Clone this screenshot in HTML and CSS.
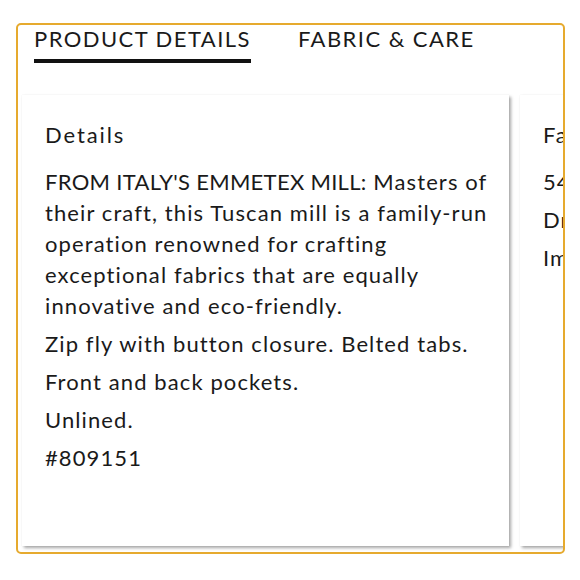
FILE: index.html
```html
<!DOCTYPE html>
<html>
<head>
<meta charset="utf-8">
<link rel="stylesheet" href="styles.css">
</head>
<body>
<div class="frame">
  <div class="tabs">
    <div class="tab active">PRODUCT DETAILS</div>
    <div class="tab">FABRIC &amp; CARE</div>
  </div>
  <div class="cards">
    <div class="card">
      <h2 class="card-title">Details</h2>
      <p><span class="caps">FROM ITALY'S EMMETEX MILL:</span> Masters of their craft, this Tuscan mill is a family-run operation renowned for crafting exceptional fabrics that are equally innovative and eco-friendly.</p>
      <p>Zip fly with button closure. Belted tabs.</p>
      <p>Front and back pockets.</p>
      <p>Unlined.</p>
      <p>#809151</p>
    </div>
    <div class="card">
      <h2 class="card-title">Fabric &amp; Care</h2>
      <p>54% cotton, 46% linen.</p>
      <p>Dry clean.</p>
      <p>Imported.</p>
    </div>
  </div>
</div>
</body>
</html>
```
FILE: styles.css
```css
* { box-sizing: border-box; }
body {
  margin: 0;
  background: #fff;
  font-family: Lato, "Noto Sans", sans-serif;
  color: #1a1a1a;
}
.frame {
  margin: 23px 0 0 16px;
  width: 549px;
  height: 531px;
  border: 2px solid #e6aa2e;
  border-radius: 5px;
  overflow: hidden;
}
.tabs {
  display: flex;
  gap: 47px;
  padding: 0 0 0 16px;
  height: 70px;
}
.tab {
  font-size: 22px;
  letter-spacing: 1.45px;
  line-height: 28px;
  height: 38px;
  color: #1a1a1a;
}
.tab.active {
  border-bottom: 4px solid #111;
}
.cards {
  display: flex;
  gap: 11px;
  padding-left: 4px;
  height: 455px;
  padding-bottom: 4px;
}
.card {
  flex: 0 0 487px;
  background: #fff;
  box-shadow: 2px 2px 3px rgba(0,0,0,0.35), 0 0 1px rgba(0,0,0,0.08);
  padding: 26px 10px 25px 23px;
}
.card-title {
  margin: 0 0 17px;
  font-weight: 400;
  font-size: 22px;
  letter-spacing: 1.9px;
  line-height: 28px;
}
.card p {
  margin: 0 0 7px;
  font-size: 22px;
  letter-spacing: 1.1px;
  line-height: 31px;
}
.caps {
  letter-spacing: 0.3px;
}
```
